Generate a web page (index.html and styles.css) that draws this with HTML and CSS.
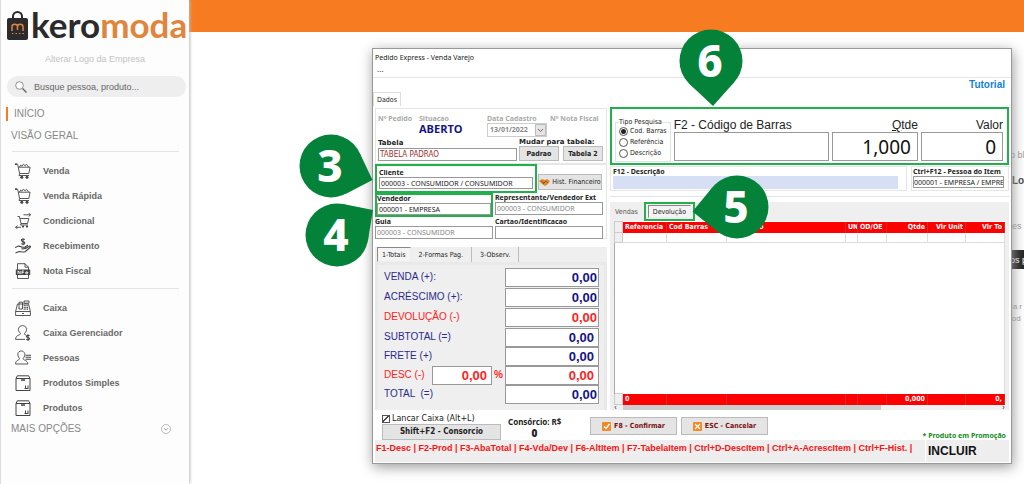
FILE: index.html
```
<!DOCTYPE html>
<html lang="pt-BR">
<head>
<meta charset="utf-8">
<title>Keromoda - Pedido Express</title>
<link rel="stylesheet" href="styles.css">
</head>
<body>
<svg class="defs" aria-hidden="true">
  <defs>
    <symbol id="cart" viewBox="0 0 16 16">
      <path d="M0 1.2h2.6l2 9.300h9.200l1.300-6.300H3.500M4.600 10.500l-.6 2h10M4.500 4.200l1-2 1.500.8 1.400-1.800 1.600 1.500 1.500-1.300 2 2.500" fill="none" stroke="currentColor" stroke-width=".9"/>
      <path d="M0 .6h2v1.300H0z" fill="currentColor"/><circle cx="6.800" cy="14.300" r="1.500" fill="currentColor"/><circle cx="12" cy="14.300" r="1.500" fill="currentColor"/>
    </symbol>
    <symbol id="swap" viewBox="0 0 16 16">
      <path d="M2.500 3.500h2l1.500 7h6.500l1.300-5H5M6 10.500l-.5 1.500h7.500M8.500 1.800h7M13.500 0l2 1.800-2 1.800M6 14.300H.6M2.600 12.500l-2 1.800 2 1.700" fill="none" stroke="currentColor" stroke-width=".9"/>
      <circle cx="8" cy="13.600" r="1.100" fill="currentColor"/><circle cx="12" cy="13.600" r="1.100" fill="currentColor"/>
    </symbol>
    <symbol id="hand" viewBox="0 0 16 16">
      <path d="M9.800 1.600C9 .7 6.300.6 6.300 2.300s3.500 1 3.500 2.700S7 6.500 6.100 5.500M8 .2v7M0 9.500l3-1.300c2-.5 3 .8 4.500 1.100h2.600c1 .9-.5 1.700-3.600 1.500M10.500 10.500l4-2.400c1.300-.2 1.200.8.5 1.400l-5 4.200c-2 1-4-.2-6-.2L.5 15M10 9l3-1.800" fill="none" stroke="currentColor" stroke-width="1.100"/>
    </symbol>
    <symbol id="nfe" viewBox="0 0 16 16">
      <path d="M2.500 7V.7h7.500l3.500 3.500V7M2.500 11.500v4h11v-4M10 .7v3.500h3.500" fill="none" stroke="currentColor" stroke-width=".9"/>
      <path d="M.8 6.500h14.400v5.500H.8z" fill="currentColor"/>
      <path d="M3 11V7.800l2.200 3V7.800M7 11V8h2M7 9.500h1.700M10.600 9.800h2.400c0-1.400-2.400-1.400-2.400 0s1.400 1.300 2.200.8" fill="none" stroke="#fff" stroke-width=".8"/>
    </symbol>
    <symbol id="register" viewBox="0 0 16 16">
      <path d="M.6 11.500h14.800v4H.6zM.6 11.500L2.500 4H13.500l1.900 7.500M4 9V2.200h3.500V9zM9 1h5v2.200H9zM11 3.200V4M7 13.500h2" fill="none" stroke="currentColor" stroke-width=".9"/>
      <path d="M8.700 5.500h4M8.700 7.300h4.400M8.700 9.100h4.800" stroke="currentColor" stroke-dasharray="1.100 .5" stroke-width="1.200"/>
    </symbol>
    <symbol id="person-cash" viewBox="0 0 16 16">
      <path d="M5.500 8.500C1.500 4.800 3.800.6 7.500.6s6 4.200 2 7.900c-.3 1 .5 1.300 1.500 1.500M5.500 8.500c.2 2-4.900 1-4.900 5.900h9.400" fill="none" stroke="currentColor" stroke-width=".9"/>
      <path d="M14.600 10.800c-.8-.8-3.200-.8-3.200.6s3.200.8 3.200 2.200-2.400 1.500-3.400.5M13 9.300V16" fill="none" stroke="currentColor" stroke-width="1.100"/>
    </symbol>
    <symbol id="person-list" viewBox="0 0 16 16">
      <path d="M4.500 8.500C1.500 4.800 2.800 1 6.200 1s5 3.800 2 7.500c-.3 2 4.600 1.500 4.600 5.500H.6c0-4.500 4.100-3.500 3.900-5.500z" fill="none" stroke="currentColor" stroke-width=".9"/>
      <path d="M10.500 5.300H16M10.500 7.300H16M10.500 9.300H16" stroke="currentColor" stroke-width="1.100"/>
    </symbol>
    <symbol id="box" viewBox="0 0 16 16">
      <path d="M1 3.500h14v12H1zM1 3.500L2.300.8h11.400L15 3.500M9.500 13.500h4M10.500 13v-2.500M13 13v-2.500" fill="none" stroke="currentColor" stroke-width="1"/><path d="M6 4.300h4v1.500H6z" fill="currentColor"/>
    </symbol>
  </defs>
</svg>
<div class="app">
  <aside class="sidebar">
    <div class="logo">
      <svg class="logo-bag" viewBox="0 0 21 29" aria-hidden="true">
        <rect y="7" width="21" height="22" rx="2" fill="#2b2a2c"/>
        <path d="M6 9V5.500a4.500 4.500 0 0 1 9 0V9" fill="none" stroke="#2b2a2c" stroke-width="2"/>
        <path d="M5 20v-4.500c0-3 5.500-3 5.500 0V19v-3.500c0-3 5.500-3 5.500 0V20" fill="none" stroke="#df863d" stroke-width="1.500"/>
        <path d="M5 22.500h12" stroke="#df863d" stroke-dasharray="1.500 2"/>
      </svg>
      <span class="logo-name">kero<span class="logo-accent">moda</span></span>
    </div>
    <a class="logo-change" href="#">Alterar Logo da Empresa</a>
    <label class="search">
      <svg viewBox="0 0 12 12" aria-hidden="true"><circle cx="4.500" cy="4.500" r="3.800" fill="#fff" stroke="#777" stroke-width=".8"/><path d="M7.500 7.500l4 4" stroke="#666" stroke-width="1.400"/></svg>
      <input type="search" placeholder="Busque pessoa, produto..." aria-label="Busque pessoa, produto">
    </label>
    <nav class="menu">
      <a class="menu-title menu-current" href="#">INÍCIO</a>
      <a class="menu-title" href="#">VISÃO GERAL</a>
      <div class="menu-group">
        <a class="menu-item" href="#"><svg><use href="#cart"/></svg>Venda</a>
        <a class="menu-item" href="#"><svg><use href="#cart"/></svg>Venda Rápida</a>
        <a class="menu-item" href="#"><svg><use href="#swap"/></svg>Condicional</a>
        <a class="menu-item" href="#"><svg><use href="#hand"/></svg>Recebimento</a>
        <a class="menu-item" href="#"><svg><use href="#nfe"/></svg>Nota Fiscal</a>
      </div>
      <div class="menu-group">
        <a class="menu-item" href="#"><svg><use href="#register"/></svg>Caixa</a>
        <a class="menu-item" href="#"><svg><use href="#person-cash"/></svg>Caixa Gerenciador</a>
        <a class="menu-item" href="#"><svg><use href="#person-list"/></svg>Pessoas</a>
        <a class="menu-item" href="#"><svg><use href="#box"/></svg>Produtos Simples</a>
        <a class="menu-item" href="#"><svg><use href="#box"/></svg>Produtos</a>
      </div>
      <a class="menu-title menu-more" href="#">MAIS OPÇÕES
        <svg viewBox="0 0 10 10" aria-hidden="true"><circle cx="5" cy="5" r="4.500" fill="none" stroke="#aaa" stroke-width=".8"/><path d="M3 4.200l2 2 2-2" fill="none" stroke="#999" stroke-width=".9"/></svg>
      </a>
    </nav>
  </aside>
  <main class="main">
    <div class="topbar"></div>
    <div class="notes">
      <p class="note">o bl</p>
      <p class="note note-strong">Lo</p>
      <p class="note note-low">es</p>
      <button class="note-button" type="button">os p</button>
      <p class="note note-small">ra r<br>lod</p>
    </div>
  </main>
</div>

<section class="window">
  <header class="window-title">Pedido Express - Venda Varejo</header>
  <div class="window-menu">...</div>
  <div class="window-tools">
    <button class="page-tab" type="button">Dados</button>
    <a class="tutorial" href="#">Tutorial</a>
  </div>
  <div class="workspace">
    <div class="order">
      <div class="panel order-head">
        <div class="head-info">
          <span class="cap muted">Nº Pedido</span>
          <span class="cap muted">Situacao<strong class="status">ABERTO</strong></span>
          <label class="cap muted">Data Cadastro
            <span class="date"><select><option>13/01/2022</option></select><svg viewBox="0 0 11 12" aria-hidden="true"><path d="M.5.5h10v11H.5z" fill="#e4e4e4" stroke="#bbb"/><path d="M3 5l2.500 2.500L8 5" fill="none" stroke="#666"/></svg></span>
          </label>
          <span class="cap muted">Nº Nota Fiscal</span>
        </div>
        <div class="head-table">
          <label class="field grow"><span class="cap cap-wide">Tabela</span><input class="maroon" value="TABELA PADRAO"></label>
          <div class="switch">
            <span class="cap cap-wide">Mudar para tabela:</span>
            <div class="switch-buttons"><button class="btn" type="button">Padrao</button><button class="btn" type="button">Tabela 2</button></div>
          </div>
        </div>
      </div>
      <div class="panel people">
        <div class="people-row">
          <label class="field marked client"><span class="cap">Cliente</span><input value="000003 - CONSUMIDOR / CONSUMIDOR"></label>
          <button class="btn history" type="button"><svg viewBox="0 0 11 8" aria-hidden="true"><path d="M0 3l3-2 3 1 2-1 3 2-2 3-3 2-3-2z" fill="#e0862b"/><path d="M2 3l3 2 2-2 2 2M4 6l2-2" fill="none" stroke="#8a4a10" stroke-width=".8"/></svg>Hist. Financeiro</button>
        </div>
        <div class="people-pair">
          <label class="field marked"><span class="cap">Vendedor</span><input value="000001 - EMPRESA"></label>
          <label class="field"><span class="cap">Representante/Vendedor Ext</span><input class="dim" value="000003 - CONSUMIDOR"></label>
        </div>
        <div class="people-pair people-last">
          <label class="field"><span class="cap">Guia</span><input class="dim" value="000003 - CONSUMIDOR"></label>
          <label class="field"><span class="cap">Cartao/Identificacao</span><input value=""></label>
        </div>
      </div>
      <div class="totals-tabs">
        <button class="sub-tab sub-tab-on" type="button">1-Totais</button>
        <button class="sub-tab" type="button">2-Formas Pag.</button>
        <button class="sub-tab" type="button">3-Observ.</button>
      </div>
      <div class="totals">
        <div class="totals-upper">
          <label class="total"><span>VENDA (+):</span><input value="0,00"></label>
          <label class="total"><span>ACRÉSCIMO (+):</span><input value="0,00"></label>
          <label class="total red"><span>DEVOLUÇÃO (-)</span><input value="0,00"></label>
        </div>
        <div class="totals-lower">
          <label class="total inset"><span>SUBTOTAL (=)</span><input value="0,00"></label>
          <label class="total inset"><span>FRETE (+)</span><input value="0,00"></label>
          <div class="total red inset"><label for="desc">DESC (-)</label><input class="percent" value="0,00" aria-label="Desconto em %"><b>%</b><input id="desc" value="0,00"></div>
          <label class="total"><span>TOTAL &nbsp;(=)</span><input value="0,00"></label>
        </div>
      </div>
    </div>

    <div class="items">
      <div class="lookup">
        <fieldset class="kinds">
          <legend>Tipo Pesquisa</legend>
          <label><input type="radio" name="kind" checked>Cod. Barras</label>
          <label><input type="radio" name="kind">Referência</label>
          <label><input type="radio" name="kind">Descrição</label>
        </fieldset>
        <label class="big code"><span>F2 - Código de Barras</span><input value=""></label>
        <label class="big qty"><span><u>Q</u>tde</span><input value="1,000"></label>
        <label class="big price"><span>Valor</span><input value="0"></label>
      </div>
      <div class="describe">
        <label class="panel field describe-text"><span class="cap">F12 - Descrição</span><input class="blue" value=""></label>
        <label class="panel field describe-person"><span class="cap">Ctrl+F12 - Pessoa do Item</span><input value="000001 - EMPRESA / EMPRES"></label>
      </div>
      <div class="grid-panel">
        <div class="grid-tabs">
          <button class="grid-tab" type="button">Vendas</button>
          <span class="marked grid-mark"><button class="sub-tab sub-tab-on" type="button">Devolução</button></span>
        </div>
        <div class="grid-wrap">
          <table class="grid">
            <colgroup><col class="c-mark"><col class="c-ref"><col class="c-code"><col class="c-desc"><col class="c-un"><col class="c-od"><col class="c-qty"><col class="c-unit"><col class="c-total"></colgroup>
            <thead><tr><th class="mark"></th><th>Referencia</th><th>Cod Barras</th><th>Descricao</th><th>UN</th><th>OD/OE</th><th class="num">Qtde</th><th class="num">Vlr Unit</th><th class="num">Vlr To</th></tr></thead>
            <tbody>
              <tr class="row"><td class="mark"></td><td></td><td></td><td></td><td></td><td></td><td></td><td></td><td></td></tr>
              <tr class="rest"><td colspan="9"></td></tr>
            </tbody>
            <tfoot><tr><td class="mark"></td><td>0</td><td></td><td></td><td></td><td></td><td class="num">0,000</td><td></td><td class="num">0,</td></tr></tfoot>
          </table>
          <div class="scrollbar"><span>‹</span><i></i><span>›</span></div>
        </div>
      </div>
    </div>
  </div>

  <footer class="actions">
    <div class="cash">
      <label><input type="checkbox" checked>Lancar Caixa (Alt+L)</label>
      <button class="btn" type="button">Shift+F2 - Consorcio</button>
    </div>
    <div class="consortium">Consórcio: R$<b>0</b></div>
    <button class="btn act" type="button"><svg viewBox="0 0 9 9" aria-hidden="true"><rect width="9" height="9" rx="1" fill="#f08a24"/><path d="M2 4.500l2 2L7.500 2" fill="none" stroke="#fff" stroke-width="1.300"/></svg>F8 - Confirmar</button>
    <button class="btn act" type="button"><svg viewBox="0 0 9 9" aria-hidden="true"><rect width="9" height="9" rx="1" fill="#f08a24"/><path d="M2 2l5 5M7 2L2 7" fill="none" stroke="#fff" stroke-width="1.200"/></svg>ESC - Cancelar</button>
    <p class="promo">* Produto em Promoção</p>
  </footer>
  <div class="statusbar">
    <p class="keys">F1-Desc | F2-Prod | F3-AbaTotal | F4-Vda/Dev | F6-AltItem | F7-TabelaItem | Ctrl+D-DescItem | Ctrl+A-AcrescItem | Ctrl+F-Hist. |</p>
    <strong class="mode">INCLUIR</strong>
  </div>

  <svg class="pin pin-3" viewBox="-32 -32 64 64"><circle r="31.500"/><path d="M28.500-13.500L41.500 14 14.500 28z"/><text x="-1" y="16">3</text></svg>
  <svg class="pin pin-4" viewBox="-32 -32 64 64"><circle r="31.500"/><path d="M6-31L36-25 31 5z"/><text x="-1" y="16">4</text></svg>
  <svg class="pin pin-5" viewBox="-32 -32 64 64"><circle r="31.500"/><path d="M-24.300-20L-44.500 4.500-19.800 24.500z"/><text x="-1" y="16">5</text></svg>
  <svg class="pin pin-6" viewBox="-32 -32 64 64"><circle r="31.500"/><path d="M-21.500 23L2 45 23.400 21z"/><text x="-1" y="16">6</text></svg>
</section>
</body>
</html>
```
FILE: styles.css
```
* { box-sizing: border-box; }
body {
  margin: 0;
  min-height: 100vh;
  position: relative;
  overflow: hidden;
  background: #fff;
  font-family: "Liberation Sans", Arial, sans-serif;
}
p { margin: 0; }
a { color: inherit; text-decoration: none; }
button, input, select { font: inherit; color: inherit; margin: 0; }
.defs { position: absolute; width: 0; height: 0; }

.app { display: flex; min-height: 100vh; }

/* Sidebar */
.sidebar {
  flex: 0 0 189px;
  min-width: 0;
  padding: 10px 3px 0 6px;
  background: #fdfdfd;
  border-left: 1px solid #ddd;
  box-shadow: 1px 0 3px #bbb;
  z-index: 1;
}
.logo { display: flex; height: 34px; }
.logo-bag { flex: none; width: 21px; height: 29px; margin-top: 1px; }
.logo-name { margin-left: 3px; font: 700 35px/28px Lato, sans-serif; color: #2b2a2c; }
.logo-accent { color: #df863d; }
.logo-change { display: block; margin: 8px 0 10px; padding-left: 38px; font-size: 9px; line-height: 14px; color: #c3c3c3; }
.search {
  display: flex;
  align-items: center;
  height: 21px;
  padding: 0 8px;
  gap: 7px;
  border-radius: 11px;
  background: #eee;
}
.search svg { flex: none; width: 12px; height: 12px; }
.search input { flex: 1; min-width: 0; padding: 0; border: 0; background: none; font-size: 9px; outline: 0; }
.search input::placeholder { color: #666; opacity: 1; }
.menu-title { display: block; margin-bottom: 8px; padding-left: 4px; font-size: 10px; line-height: 14px; color: #888; }
.menu-current { margin: 10px 0 8px -1px; padding-left: 6px; border-left: 2px solid #f77b20; }
.menu-group { margin: 0 7px 0 5px; padding: 6px 0 5px; border-top: 1px solid #e4e4e4; }
.menu-group + .menu-group { padding-bottom: 0; }
.menu-item { display: flex; align-items: center; gap: 12px; height: 25px; padding-left: 3px; font-size: 9px; font-weight: 700; color: #686868; }
.menu-item svg { width: 16px; height: 16px; color: #444; }
.menu-more { display: flex; justify-content: space-between; align-items: center; margin-top: 2px; padding-right: 15px; }
.menu-more svg { width: 10px; height: 10px; }

/* Page under the order window */
.main { flex: 1; min-width: 0; }
.topbar { height: 32px; background: #f77b20; }
.notes { width: 14px; margin-left: auto; padding-top: 116px; overflow: hidden; white-space: nowrap; color: #999; font-size: 9px; line-height: 14px; }
.note-strong { margin-top: 12px; padding-left: 2px; font-size: 10px; font-weight: 700; color: #444; }
.note-low { margin-top: 31px; padding-left: 2px; }
.note-button { display: block; width: 40px; height: 19px; margin: 17px 0 32px; padding: 0; border: 0; background: #222; color: #fff; font-size: 9px; text-align: left; }
.note-small { font-size: 8px; line-height: 12px; }

/* Order window */
.window {
  position: absolute;
  top: 48px;
  left: 372px;
  right: 12px;
  z-index: 2;
  display: flex;
  flex-direction: column;
  padding: 0 2px 1px;
  border: 1px solid #999;
  background: #fff;
  box-shadow: 1px 3px 12px #999;
  font: 8px/10px "DejaVu Sans Condensed", Tahoma, sans-serif;
  color: #222;
}
.window-title { height: 16px; font: 7px/17px "Noto Sans", sans-serif; }
.window-menu { height: 13px; margin: 0 -2px; padding-left: 4px; border-bottom: 1px solid #e5e5e5; line-height: 10px; }
.window-tools { display: flex; justify-content: space-between; height: 28px; }
.page-tab { align-self: flex-end; width: 28px; height: 14px; margin-left: -2px; padding: 0; border: 1px solid #ddd; border-bottom: 0; background: #fff; font-size: 7px; }
.tutorial { padding: 1px 4px; font: 700 10px/12px "Liberation Sans", sans-serif; color: #1683d8; }
.workspace { display: grid; grid-template-columns: 232px minmax(0, 1fr); gap: 3px; height: 304px; }
.panel { border: 1px solid #e6e6e6; }
.cap { font: 700 7px/9px "Noto Sans", sans-serif; white-space: nowrap; color: #222; }
.cap-wide { font-family: "DejaVu Sans", sans-serif; }
.muted { color: #aaa; }
.field { display: flex; flex-direction: column; min-width: 0; }
.field input { width: 100%; height: 13px; padding: 0 1px; border: 1px solid #999; border-radius: 0; background: #fff; font: 7px/9px "Noto Sans", sans-serif; }
.field .dim { color: #888; }
.field .maroon { color: #9a3030; font: 8px/10px "DejaVu Sans Condensed", sans-serif; }
.field .blue { border: 0; background: #d6dff4; }
.marked { border: 2px solid #22b04c; }
.btn { padding: 0; border: 1px solid #bbb; background: #e4e4e4; font: 700 7px/10px "DejaVu Sans Condensed", sans-serif; color: #222; white-space: nowrap; }

.order { display: flex; flex-direction: column; min-width: 0; }
.order-head { height: 56px; margin-top: 2px; padding: 5px 3px 0 2px; }
.head-info { display: grid; grid-template-columns: 41px 68px 63px 1fr; height: 25px; }
.head-info .cap { display: flex; flex-direction: column; align-items: flex-start; }
.status { font: 700 11px/12px "Open Sans", sans-serif; color: #14148a; }
.date { display: flex; width: 60px; height: 14px; border: 1px solid #ccc; }
.date select { flex: 1; min-width: 0; padding: 0 2px; border: 0; appearance: none; background: #fff; font: 700 7px/10px "Noto Sans", sans-serif; color: #888; }
.date svg { width: 11px; height: 12px; }
.head-table { display: flex; gap: 2px; }
.grow { flex: 1; }
.switch { flex: 0 0 84px; }
.switch .cap { display: block; line-height: 7px; }
.switch-buttons { display: flex; gap: 4px; }
.switch .btn { flex: 1; height: 15px; }
.people { height: 75px; }
.people-row { display: flex; gap: 1px; }
.client { flex: 0 0 162px; height: 29px; padding: 3px 2px 2px; margin: -1px 0 0 -1px; }
.client .cap { line-height: 8px; }
.history { flex: 1; display: flex; align-items: center; justify-content: center; gap: 2px; height: 16px; margin: 9px 4px 0 0; font-weight: 400; }
.history svg { width: 11px; height: 8px; }
.people-pair { display: grid; grid-template-columns: 118px 1fr; gap: 2px; margin: 0 3px 0 -1px; }
.people-pair .marked { height: 24px; }
.people-pair .marked input { height: 12px; }
.people-pair .cap { line-height: 8px; }
.people-pair .field:not(.marked) { padding-top: 1px; }
.people-last { height: 21px; }

.totals-tabs { display: flex; margin-top: 8px; padding-left: 2px; background: #efefef; }
.sub-tab { height: 15px; padding: 0 8px; border: 0; border-right: 1px solid #bbb; background: none; font-size: 7px; }
.sub-tab-on { padding: 0 4px; border: 1px solid #999; border-color: #888 #eee #eee #888; background: #f4f4f4; }
.totals { flex: 1; padding: 3px 5px 0 2px; border: 3px solid #e9e9e9; border-bottom: 0; background: #efefef; font-family: "Liberation Sans", sans-serif; }
.totals-upper { display: grid; gap: 1px; padding-bottom: 1px; }
.total { display: flex; height: 19px; padding-left: 4px; justify-content: space-between; font-size: 10px; line-height: 17px; color: #2a2a8c; white-space: nowrap; }
.total input { width: 94px; height: 19px; padding: 0 1px; border: 1px solid #999; border-radius: 0; background: #fff; font-size: 13px; font-weight: 700; text-align: right; color: #14148a; }
.inset input { padding-right: 4px; }
.total.red, .red input { color: #f22; }
.total .percent { width: 60px; margin-left: auto; }
.total b { margin: 0 2px; }

.items { display: flex; flex-direction: column; min-width: 0; }
.lookup { display: flex; gap: 3px; height: 58px; margin-top: 1px; padding: 0 4px 0 3px; border: 2px solid #22b04c; background: #fff; }
.kinds { flex: 0 0 55px; height: 44px; margin: 9px 0 0; padding: 0 3px; border: 1px solid #e2e2e2; font-size: 7px; line-height: 9px; white-space: nowrap; }
.kinds legend { padding: 0; line-height: 8px; }
.kinds label { display: flex; align-items: center; gap: 2px; height: 11px; }
.kinds input {
  flex: none;
  width: 9px;
  height: 9px;
  appearance: none;
  border: 1px solid #555;
  border-radius: 50%;
  background: #fff;
}
.kinds input:checked { background: radial-gradient(circle, #222 2px, #fff 3px); }
.big { display: flex; flex-direction: column; min-width: 0; font: 12px/13px "Liberation Sans", sans-serif; padding-top: 10px; white-space: nowrap; }
.big input { width: 100%; height: 29px; padding: 0 6px; border: 1px solid #999; border-radius: 0; font: 19px/24px "Noto Sans", sans-serif; text-align: right; color: #111; }
.code { flex: 155; }
.qty { flex: 86; text-align: right; }
.price { flex: 82; text-align: right; }
.describe { display: flex; gap: 4px; margin-top: 1px; }
.describe .cap { line-height: 8px; }
.describe-text { flex: 3; height: 25px; padding: 1px 8px 0 2px; }
.describe-person { flex: 0 0 98px; padding: 1px 4px 0 1px; }
.describe-person input { height: 12px; padding: 0; }
.grid-panel { flex: 1; display: flex; flex-direction: column; min-height: 0; margin-top: 5px; padding-top: 5px; border-top: 1px solid #e4e4e4; }
.grid-tabs { display: flex; align-items: flex-end; height: 19px; background: #efefef; }
.grid-tab { height: 18px; padding: 0 5px; border: 0; background: none; font-size: 7px; color: #555; }
.grid-mark { display: flex; height: 19px; margin-left: 1px; padding: 1px 2px; background: #f4f4f4; }
.grid-mark .sub-tab { height: 13px; }
.grid-wrap { flex: 1; display: flex; flex-direction: column; min-height: 0; padding: 0 4px; background: linear-gradient(to right, #efefef 4px, #fff 4px, #fff calc(100% - 4px), #efefef 0); }
.grid { width: 100%; height: 184px; table-layout: fixed; border-collapse: collapse; font: 7px/9px "DejaVu Sans Condensed", sans-serif; }
.grid th, .grid td { height: 11px; padding: 0 2px; overflow: hidden; white-space: nowrap; text-align: left; border-right: 1px solid #ddd; }
.grid thead th, .grid tfoot td { background: #f00; color: #fff; font-weight: 700; border-right-color: #b33; }
.grid thead th.mark, .grid .mark, .grid tfoot td.mark { background: #efefef; border: 1px solid #ccc; }
.grid .num { text-align: right; }
.grid .row td { height: 10px; }
.grid .rest td { height: auto; border-left: 1px solid #aaa; border-top: 1px solid #ddd; }
.c-mark { width: 8px; } .c-ref { width: 44px; } .c-code { width: 60px; }
.c-un { width: 12px; } .c-od { width: 29px; } .c-qty { width: 41px; } .c-unit { width: 38px; } .c-total { width: 39px; }
.scrollbar { display: flex; justify-content: space-between; height: 7px; line-height: 6px; background: #f2f2f2; }
.scrollbar i { flex: 0 0 66%; background: #cdcdcd; margin: 0 auto 0 6px; }

.actions { display: flex; height: 30px; padding-left: 7px; background: #fff; }
.cash { width: 119px; margin-top: 4px; }
.cash label { display: flex; align-items: center; gap: 2px; height: 10px; font: 8px/10px "DejaVu Sans", sans-serif; white-space: nowrap; }
.cash input {
  width: 8px;
  height: 8px;
  appearance: none;
  border: 1px solid #555;
  background: #fff;
}
.cash input:checked { background: linear-gradient(135deg, #fff 40%, #444 40%, #444 55%, #fff 55%); }
.cash .btn { width: 100%; height: 16px; font-size: 8px; }
.consortium { width: 68px; margin: 7px 14px 0 7px; font: 700 8px/10px "Noto Sans", sans-serif; white-space: nowrap; }
.consortium b { display: block; width: 53px; font-size: 10px; line-height: 13px; text-align: center; }
.act { display: flex; align-items: center; justify-content: center; gap: 3px; width: 87px; height: 18px; margin: 7px 4px 0 0; color: #7c1010; }
.act svg { width: 9px; height: 9px; }
.promo { margin: 21px 3px 0 auto; font: 700 7px/9px "Noto Sans", sans-serif; color: #148a1c; }
.statusbar { display: flex; height: 22px; background: #eee; font-family: "Liberation Sans", sans-serif; }
.keys { flex: 1; min-width: 0; padding-left: 1px; overflow: hidden; white-space: nowrap; font-size: 9px; font-weight: 700; line-height: 17px; color: #f11; }
.mode { flex: 0 0 84px; padding-left: 2px; border-left: 1px solid #fff; font-size: 12px; line-height: 22px; color: #111; }

/* Step pins */
.pin { position: absolute; width: 64px; height: 64px; overflow: visible; fill: #048239; pointer-events: none; }
.pin text { fill: #fff; font: 800 44px "Noto Sans", "Open Sans", sans-serif; text-anchor: middle; }
.pin-3 { left: -74px; top: 85px; }
.pin-4 { left: -68px; top: 154px; }
.pin-5 { left: 332px; top: 126px; }
.pin-6 { left: 306px; top: -20px; }
```
